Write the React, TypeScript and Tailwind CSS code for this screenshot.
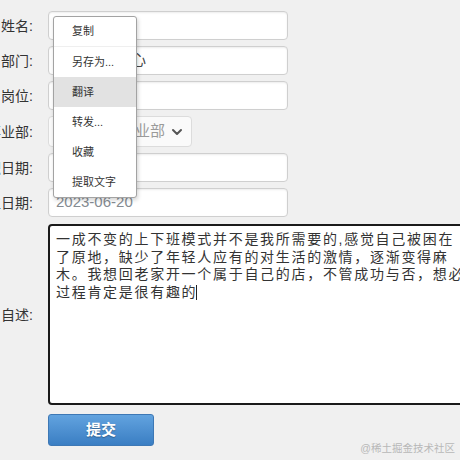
import React from "react";

function Label({ text }: { text: string }) {
  return (
    <div className="w-[33px] shrink-0 flex justify-end whitespace-nowrap text-[14px] text-[#333] pt-[2px]">
      <span>{text}</span>
    </div>
  );
}

function Input({ children, className = "" }: { children?: React.ReactNode; className?: string }) {
  return (
    <div
      className={
        "w-[240px] h-[29px] shrink-0 bg-white border border-[#cfcfcf] rounded-[4px] shadow-[inset_0_1px_2px_rgba(0,0,0,0.08)] px-[7px] flex items-center text-[15px] whitespace-nowrap overflow-hidden " +
        className
      }
    >
      {children}
    </div>
  );
}

export default function App() {
  const menu = ["复制", "另存为...", "翻译", "转发...", "收藏", "提取文字"];
  return (
    <div className="relative w-[460px] h-[460px] overflow-hidden bg-[#f0f0f0] font-['Liberation_Sans','Noto_Sans_CJK_SC',sans-serif]">
      <div className="flex flex-col pt-[11px]">
        <div className="flex items-center gap-[15px] h-[29px]">
          <Label text="姓名:" />
          <Input />
        </div>
        <div className="flex items-center gap-[15px] h-[29px] mt-[6px]">
          <Label text="部门:" />
          <Input className="text-[#444]">技术研发中心</Input>
        </div>
        <div className="flex items-center gap-[15px] h-[29px] mt-[6px]">
          <Label text="岗位:" />
          <Input />
        </div>
        <div className="flex items-center gap-[15px] h-[31px] mt-[6px]">
          <Label text="所属事业部:" />
          <div className="w-[144px] h-[31px] shrink-0 bg-[#fafafa] border border-[#dcdcdc] rounded-[4px] pl-[11px] pr-[8px] flex items-center justify-between text-[15px] text-[#9a9a9a] whitespace-nowrap">
            <span>技术研发事业部</span>
            <svg width="12" height="12" viewBox="0 0 12 12" className="shrink-0">
              <path d="M2 4 L6 8 L10 4" fill="none" stroke="#555" strokeWidth="2" strokeLinecap="round" strokeLinejoin="round" />
            </svg>
          </div>
        </div>
        <div className="flex items-center gap-[15px] h-[29px] mt-[6px]">
          <Label text="入职日期:" />
          <Input />
        </div>
        <div className="flex items-center gap-[15px] h-[29px] mt-[6px]">
          <Label text="出生日期:" />
          <Input className="text-[#858b92]">2023-06-20</Input>
        </div>
        <div className="flex items-center gap-[15px] h-[181px] mt-[7px]">
          <Label text="自述:" />
          <div className="w-[440px] h-[181px] shrink-0 bg-white border-2 border-[#1a1a1a] rounded-[4px] pl-[6px] pt-[5px] text-[14px] leading-[17.5px] tracking-[1.7px] text-[#333] whitespace-nowrap overflow-hidden">
            <div>一成不变的上下班模式并不是我所需要的,感觉自己被困在</div>
            <div>了原地，缺少了年轻人应有的对生活的激情，逐渐变得麻</div>
            <div>木。我想回老家开一个属于自己的店，不管成功与否，想必</div>
            <div className="flex items-center">
              <span>过程肯定是很有趣的</span>
              <span className="inline-block w-px h-[15px] bg-[#222] -ml-[1px]" />
            </div>
          </div>
        </div>
        <div className="flex mt-[9px] pl-[48px]">
          <button className="w-[106px] h-[32px] rounded-[3px] border border-[#3d78b5] bg-gradient-to-b from-[#62a3df] to-[#3a7ec3] text-white text-[15px] font-bold [text-shadow:0_1px_1px_rgba(0,0,0,0.3)] flex items-center justify-center">
            提交
          </button>
        </div>
      </div>

      <div className="absolute left-[53px] top-[16px] w-[84px] bg-white border border-[#a3a3a3] rounded-[3px] shadow-[1px_2px_4px_rgba(0,0,0,0.18)] py-0">
        {menu.map((m, i) => (
          <div
            key={m}
            className={
              "h-[30px] pl-[18px] flex items-center text-[11px] text-[#333] whitespace-nowrap " +
              (i === 2 ? "bg-[#e2e2e2] " : "") +
              (i === 0 ? "border-b border-[#efefef] " : "")
            }
          >
            {m}
          </div>
        ))}
      </div>

      <div className="absolute right-[5px] bottom-[3px] text-[10.5px] text-[#b8b8b8] whitespace-nowrap">
        @稀土掘金技术社区
      </div>
    </div>
  );
}
